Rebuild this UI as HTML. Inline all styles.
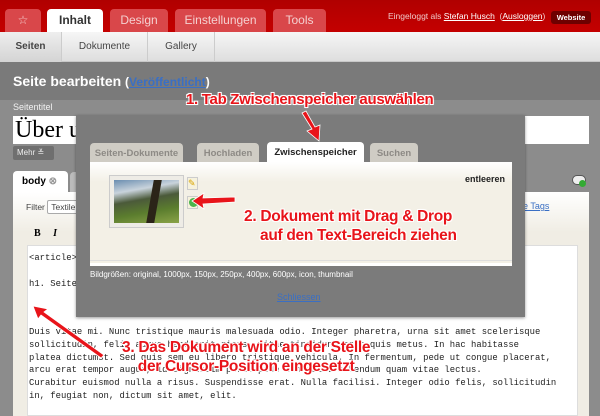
<!DOCTYPE html>
<html><head><meta charset="utf-8"><style>
*{margin:0;padding:0;box-sizing:border-box}
body{width:600px;height:416px;overflow:hidden;background:#8c8c8c;font-family:"Liberation Sans",sans-serif;position:relative}
.a{position:absolute}
.top{left:0;top:0;width:600px;height:32px;background:linear-gradient(#b00000,#c40000)}
.tab{top:9px;height:23px;background:#d9474a;border-radius:4px 4px 0 0;color:#f4d0d0;font-size:12px;text-align:center;line-height:22px}
.sub{left:0;top:32px;width:600px;height:30px;background:linear-gradient(#f6f6f6,#dedede);border-bottom:1px solid #c8c8c8}
.st{top:32px;height:30px;font-size:10px;color:#444;line-height:30px;text-align:center;border-right:1px solid #ccc}
.hd{left:0;top:62px;width:600px;height:38px;background:#7a7a7a}
.ann{color:#e8141a;font-weight:bold;font-family:"Liberation Sans",sans-serif;text-shadow:-1px -1px 0 #fff,1px -1px 0 #fff,-1px 1px 0 #fff,1px 1px 0 #fff,0 0 2px #fff;letter-spacing:-0.3px}
.mono{font-family:"Liberation Mono",monospace;font-size:8.9px;color:#222;line-height:12.8px;white-space:pre}
.mt{top:143px;height:20px;background:#cfccc4;border-radius:4px 4px 0 0;font-size:9.5px;font-weight:bold;color:#8d8a85;text-align:center;line-height:21px}
</style></head><body>
<div class="a top"></div>
<div class="a tab" style="left:5px;width:36px">☆</div>
<div class="a tab" style="left:47px;width:56px;background:#fff;color:#333;font-weight:bold">Inhalt</div>
<div class="a tab" style="left:110px;width:58px">Design</div>
<div class="a tab" style="left:175px;width:91px">Einstellungen</div>
<div class="a tab" style="left:273px;width:53px">Tools</div>
<div class="a" style="left:388px;top:11px;font-size:8.5px;color:#f0c8c8">Eingeloggt als <u style="color:#fff">Stefan Husch</u> &nbsp;(<u style="color:#fff">Ausloggen</u>)</div>
<div class="a" style="left:551px;top:11px;width:40px;height:13px;background:#6e0000;border-radius:3px;color:#fff;font-size:7.5px;font-weight:bold;text-align:center;line-height:13px">Website</div>
<div class="a sub"></div>
<div class="a st" style="left:0;width:62px;font-weight:bold;background:linear-gradient(#eee,#d4d4d4)">Seiten</div>
<div class="a st" style="left:62px;width:86px">Dokumente</div>
<div class="a st" style="left:148px;width:67px">Gallery</div>
<div class="a hd"></div>
<div class="a" style="left:13px;top:73px;font-size:14px;font-weight:bold;color:#fff">Seite bearbeiten <span style="font-size:12px">(<u style="color:#3a6fc4">Veröffentlicht</u>)</span></div>
<div class="a" style="left:13px;top:102px;font-size:9px;color:#f2f2f2">Seitentitel</div>
<div class="a" style="left:13px;top:116px;width:576px;height:28px;background:#fff;font-family:'Liberation Serif',serif;font-size:24px;padding-left:2px;line-height:28px">Über uns</div>
<div class="a" style="left:13px;top:146px;width:41px;height:14px;background:#6f6f6f;border-radius:2px;color:#eee;font-size:8px;line-height:14px;padding-left:4px">Mehr ≚</div>
<div class="a" style="left:13px;top:171px;width:55px;height:22px;background:#fff;border-radius:4px 4px 0 0;font-size:10px;font-weight:bold;line-height:22px;padding-left:9px">body <span style="color:#999">⊗</span></div>
<div class="a" style="left:70px;top:172px;width:10px;height:21px;background:#bbb;border-radius:4px 4px 0 0"></div>
<div class="a" style="left:13px;top:192px;width:576px;height:224px;background:linear-gradient(#fff,#f0ede4 40px)"></div>
<div class="a" style="left:572px;top:175px;width:14px;height:10px;background:#eee;border-radius:5px;border:1px solid #555"></div>
<div class="a" style="left:579px;top:180px;width:7px;height:7px;background:#3a3;border-radius:50%"></div>
<div class="a" style="left:26px;top:202px;font-size:8.5px;color:#444">Filter <span style="border:1px solid #aaa;border-radius:2px;padding:1px 3px;background:#fff">Textile</span></div>
<div class="a" style="left:500px;top:201px;font-size:9px;color:#3a6fc4"><u>ügbare Tags</u></div>
<div class="a" style="left:34px;top:228px;font-family:'Liberation Serif',serif;font-size:10px;font-weight:bold">B &nbsp; &nbsp; <i>I</i></div>
<div class="a" style="left:27px;top:245px;width:551px;height:171px;background:#fff;border:1px solid #ddd"></div>
<div class="a mono" style="left:29px;top:252px">&lt;article&gt;

h1. Seite</div>
<div class="a mono" style="left:29px;top:326px">Duis vitae mi. Nunc tristique mauris malesuada odio. Integer pharetra, urna sit amet scelerisque
sollicitudin, felis augue hendrerit risus, vitae tincidunt eget quis metus. In hac habitasse
platea dictumst. Sed quis sem eu libero tristique vehicula. In fermentum, pede ut congue placerat,
arcu erat tempor augue, id dignissim purus pede non velit bibendum quam vitae lectus.
Curabitur euismod nulla a risus. Suspendisse erat. Nulla facilisi. Integer odio felis, sollicitudin
in, feugiat non, dictum sit amet, elit.</div>
<!-- modal -->
<div class="a" style="left:76px;top:115px;width:449px;height:202px;background:#7b7b7b;box-shadow:0 1px 3px rgba(0,0,0,.4)"></div>
<div class="a mt" style="left:90px;width:93px">Seiten-Dokumente</div>
<div class="a mt" style="left:197px;width:62px">Hochladen</div>
<div class="a mt" style="left:267px;width:97px;background:#fff;color:#222;top:142px;height:21px">Zwischenspeicher</div>
<div class="a mt" style="left:370px;width:48px">Suchen</div>
<div class="a" style="left:90px;top:162px;width:422px;height:104px;background:linear-gradient(#fff,#f3f0e6 20px);border-bottom:3px solid #fff"></div>
<div class="a" style="left:90px;top:260px;width:422px;height:1px;background:#ddd"></div>
<div class="a" style="left:465px;top:174px;font-size:9px;font-weight:bold;color:#222">entleeren</div>
<div class="a" style="left:109px;top:175px;width:75px;height:53px;background:#eeece6;border:1px solid #ccc"></div>
<div class="a" style="left:114px;top:180px;width:65px;height:43px;background:linear-gradient(170deg,#6a8db0 0%,#c9d3dc 25%,#4b5a3a 45%,#5b7d2e 70%,#8aa347 100%)"></div>
<div class="a" style="left:150px;top:180px;width:8px;height:43px;background:#2b2418;transform:skewX(-10deg)"></div>
<div class="a" style="left:187px;top:177px;width:11px;height:13px;background:#f6f2dd;border:1px solid #ccc;font-size:9px;line-height:11px;color:#d9a400">✎</div>
<div class="a" style="left:187px;top:196px;width:11px;height:13px;background:#f6f2dd;border:1px solid #ccc"></div>
<div class="a" style="left:188.5px;top:198px;width:9px;height:9px;border-radius:50%;background:#4bb34b"></div>
<div class="a" style="left:90px;top:270px;font-size:8px;color:#fff">Bildgrößen: original, 1000px, 150px, 250px, 400px, 600px, icon, thumbnail</div>
<div class="a" style="left:277px;top:292px;font-size:9px;color:#3a6fc4"><u>Schliessen</u></div>
<!-- annotations -->
<div class="a ann" style="left:186px;top:91px;font-size:15px">1. Tab Zwischenspeicher auswählen</div>
<div class="a ann" style="left:244px;top:207px;font-size:15.5px;line-height:19px">2. Dokument mit Drag &amp; Drop<br>&nbsp;&nbsp;&nbsp;&nbsp;auf den Text-Bereich ziehen</div>
<div class="a ann" style="left:122px;top:338px;font-size:15.5px;line-height:19px;text-align:center">3. Das Dokument wird an der Stelle<br>der Cursor-Position eingesetzt</div>
<svg class="a" style="left:0;top:0" width="600" height="416">
<g fill="#e8141a" stroke="#fff" stroke-width="0.8">
<path d="M302 113 L306 111 L315 127 L320 125 L319 141 L307 131 L312 129 Z"/>
<path d="M192 201 L204 193 L203 198 L235 197 L235 202 L203 204 L204 209 Z"/>
<path d="M33 306 L48 309 L44 312 L104 355 L101 358 L41 315 L38 319 Z"/>
</g>
</svg>
</body></html>
